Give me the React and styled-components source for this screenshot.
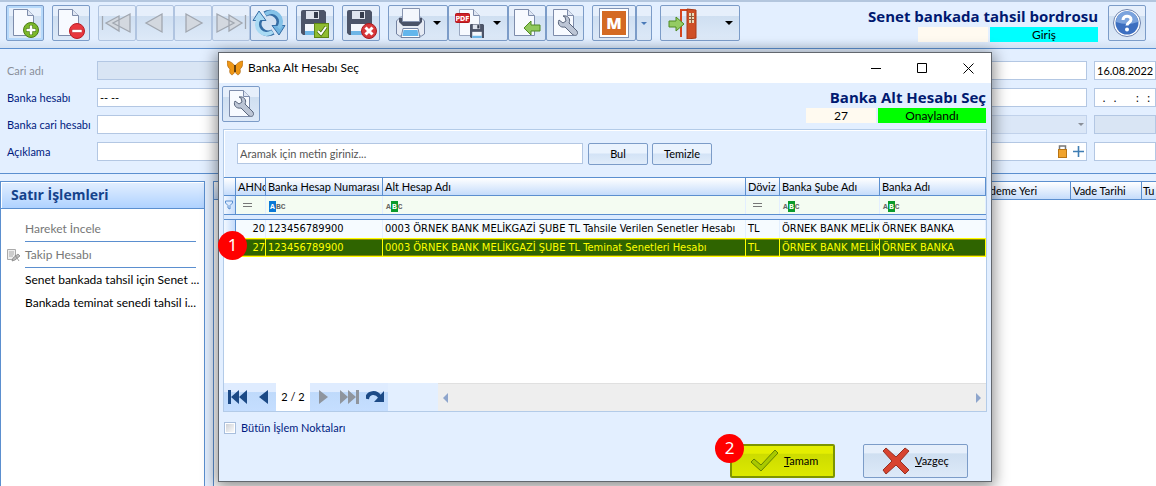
import React, { useState } from "react";
import styled, { createGlobalStyle, css } from "styled-components";

const GlobalStyle = createGlobalStyle`
  *, *::before, *::after {
    box-sizing: border-box;
  }

  body {
    margin: 0;
    background: #e3efff;
    color: #000;
    font: 11px/14px Lato, "Noto Sans", sans-serif;
  }

  button, input, select {
    font: inherit;
    color: inherit;
    margin: 0;
  }

  svg {
    display: block;
    flex: none;
  }
`;

const Page = styled.main`
  position: relative;
  display: flex;
  flex-direction: column;
  height: 100vh;
  overflow: hidden;
`;

/* ---------- toolbar ---------- */

const Toolbar = styled.header`
  display: flex;
  align-items: flex-start;
  gap: 8px;
  height: 49px;
  padding: 3px 10px 0 6px;
  border-top: 2px solid #b3c6de;
  border-bottom: 1px solid #5b8fcf;
  background: linear-gradient(#e3efff 80%, #d3e1f3);
`;

const ToolGroup = styled.div`
  display: flex;
`;

const ToolButton = styled.button`
  display: flex;
  align-items: center;
  justify-content: ${(p) => (p.$menu ? "space-between" : "center")};
  width: ${(p) => p.$width || 38}px;
  height: 36px;
  padding: ${(p) => (p.$menu ? "0 6px" : "0")};
  border: 1px solid #7c9cc8;
  border-radius: 2px;
  background: linear-gradient(#e6effb 28%, #cfdff1 30%, #dde9f8);
  ${(p) =>
    p.$active &&
    css`
      box-shadow: inset 0 0 0 2px #b6d9fb;
    `}
  &:disabled {
    border-color: #b0c4e0;
  }
`;

const TitleBlock = styled.div`
  display: flex;
  flex-direction: column;
  align-items: flex-end;
`;

const ScreenTitle = styled.h1`
  margin: 0;
  color: #001970;
  font: bold 15px/22px "Open Sans", "Noto Sans", sans-serif;
  white-space: nowrap;
`;

const StatusRow = styled.div`
  display: flex;
  gap: 2px;
`;

const Status = styled.span`
  width: ${(p) => p.$width}px;
  height: 15px;
  background: ${(p) => p.$color};
  font-size: 12px;
  line-height: 16px;
  text-align: center;
`;

/* ---------- form ---------- */

const Form = styled.form`
  display: flex;
  flex-direction: column;
  gap: 8px;
  padding: 12px 0 12px 7px;
  border-bottom: 1px solid #5b8fcf;
`;

const FormRow = styled.div`
  display: grid;
  grid-template-columns: 90px 1fr 1fr 62px;
  align-items: center;
`;

const FormLabel = styled.label`
  color: ${(p) => (p.$muted ? "#8a8f9a" : "#001a80")};
`;

const field = css`
  width: 100%;
  height: 19px;
  padding: 0 2px;
  border: 1px solid #b3c7e3;
  border-radius: 0;
  background: #fff;
  &:disabled {
    background: #d9e5f4;
  }
`;

const Field = styled.input`
  ${field}
`;

const FieldSelect = styled.select`
  ${field}
  appearance: none;
`;

const FieldWrap = styled.div`
  position: relative;
  padding-right: 7px;
`;

const FieldIcons = styled.span`
  position: absolute;
  top: 0;
  right: 10px;
  display: flex;
  align-items: center;
  gap: 6px;
  height: 19px;
`;

/* ---------- main area ---------- */

const Workspace = styled.div`
  display: flex;
  flex: 1;
  gap: 8px;
  min-height: 0;
  padding-top: 7px;
`;

const SidePanel = styled.aside`
  width: 205px;
  border: 1px solid #5b8fcf;
  border-bottom: 0;
  background: #fff;
`;

const SideTitle = styled.h2`
  height: 27px;
  margin: 0;
  padding-left: 10px;
  border-bottom: 1px solid #5b8fcf;
  background: linear-gradient(#e3efff, #afd2ff);
  box-shadow: inset 1px 1px #fff;
  color: #15428b;
  font: bold 14px/26px "Open Sans", "Noto Sans", sans-serif;
`;

const SideList = styled.ul`
  margin: 0;
  padding: 7px 4px 0 5px;
  list-style: none;
`;

const SideItem = styled.li`
  display: flex;
  align-items: center;
  height: ${(p) => (p.$ruled ? 26 : 23)}px;
`;

const SideIcon = styled.span`
  flex: none;
  width: 19px;
`;

const SideLink = styled.button`
  flex: 1;
  height: 100%;
  padding: 0;
  border: 0;
  margin-right: ${(p) => (p.$ruled ? 4 : 0)}px;
  background: none;
  font-size: 12px;
  text-align: left;
  white-space: nowrap;
  ${(p) =>
    p.$ruled &&
    css`
      border-bottom: 1px solid #5b8fcf;
      color: #777;
    `}
`;

const LinesGrid = styled.div`
  flex: 1;
  border: solid #5b8fcf;
  border-width: 1px 0 0 1px;
  background: #fff;
  overflow: hidden;
`;

const LinesTable = styled.table`
  width: 100%;
  border-spacing: 0;
  table-layout: fixed;

  th {
    height: 18px;
    padding: 0 2px;
    border: solid #5b8fcf;
    border-width: 0 1px 1px 0;
    background: linear-gradient(#fff, #c5dcfb);
    font-weight: normal;
    text-align: left;
    white-space: nowrap;
  }

  th:last-child {
    padding: 0 0 0 1px;
    border-right: 0;
  }
`;

/* ---------- dialog ---------- */

const Dialog = styled.section`
  position: absolute;
  top: 52px;
  right: 164px;
  bottom: 4px;
  left: 218px;
  display: flex;
  flex-direction: column;
  border: 1px solid #62676e;
  background: #e3efff;
  box-shadow: 0 3px 14px 2px rgba(0, 0, 0, 0.45);
`;

const TitleBar = styled.div`
  display: flex;
  align-items: center;
  height: 30px;
  padding-left: 8px;
  background: #fff;
`;

const DialogTitle = styled.h2`
  flex: 1;
  margin: 0 0 0 5px;
  font: 12px/16px Lato, "Noto Sans", sans-serif;
`;

const WindowButton = styled.button`
  display: flex;
  align-items: center;
  justify-content: center;
  width: 46px;
  height: 28px;
  padding: 0;
  border: 0;
  background: none;
`;

const DialogTools = styled.div`
  display: flex;
  justify-content: space-between;
  height: 46px;
  padding: 3px 5px 0 3px;
`;

const Panel = styled.div`
  display: flex;
  flex: 1;
  flex-direction: column;
  margin: 0 4px;
  border: 1px solid #b3cbe8;
  box-shadow: inset 1px 1px #fff;
`;

const SearchBar = styled.form`
  display: flex;
  height: 47px;
  padding: 13px 13px 0;
`;

const SearchInput = styled.input`
  flex: 0 1 346px;
  height: 21px;
  padding: 0 2px;
  margin-right: 5px;
  border: 1px solid #b3c7e3;
  background: #fff;
  &::placeholder {
    color: #555;
    opacity: 1;
  }
`;

const SmallButton = styled.button`
  width: 60px;
  height: 22px;
  margin-right: 4px;
  padding: 0;
  border: 1px solid #7c9cc8;
  border-radius: 2px;
  background: linear-gradient(#eaf3fe 45%, #d3e3f6 50%, #e0ecfa);
`;

const ListArea = styled.div`
  flex: 1;
  background: #fff;
`;

const AccountTable = styled.table`
  width: 100%;
  border-spacing: 0;
  border-top: 1px solid #5b8fcf;
  table-layout: fixed;

  th, td {
    padding: 0 0 0 2px;
    white-space: nowrap;
    overflow: hidden;
  }
`;

const HeadCell = styled.th`
  height: 18px;
  border: solid #5b8fcf;
  border-width: 0 1px 1px 0;
  background: linear-gradient(#fff, #c5dcfb);
  font-weight: normal;
  text-align: left;
`;

const FilterCell = styled.td`
  height: 18px;
  border-right: 1px solid #e3efff;
  background: #f4fcf2;
`;

const Marker = styled.td`
  position: relative;
  height: 18px;
  border-right: 1px solid #5b8fcf;
  background: linear-gradient(90deg, #f2f8ff, #c5dcfb);
  && {
    padding: 0 0 0 1px;
    overflow: visible;
  }
`;

const StripCell = styled.td`
  height: 6px;
  border: solid #5b8fcf;
  border-width: 1px 0;
  background: #dcebff;
  line-height: 0;
`;

const DataCell = styled.td`
  height: ${(p) => (p.$selected ? 19 : 17)}px;
  border-right: 1px solid ${(p) => (p.$selected ? "#ff0" : "#e3efff")};
  background: ${(p) => (p.$selected ? "#2f6400" : "#f6fbff")};
  color: ${(p) => (p.$selected ? "#ff0" : "#000")};
  font-family: "DejaVu Sans Condensed", sans-serif;
  text-align: ${(p) => (p.$right ? "right" : "left")};
  ${(p) =>
    p.$selected &&
    css`
      border-top: 1px solid #ff0;
      border-bottom: 1px solid #ff0;
      box-shadow: inset 0 1px #8a8b00, inset 0 -1px #8a8b00;
    `}
`;

const FilterTag = styled.span`
  display: inline-flex;
  align-items: center;
  margin-left: 1px;
  color: #666;
  font: bold 8px/11px "Liberation Mono", monospace;
`;

const FilterHit = styled.b`
  width: 7px;
  height: 11px;
  background: ${(p) => p.$color};
  color: #fff;
  text-align: center;
`;

const Equals = styled.span`
  display: block;
  width: 9px;
  height: 4px;
  margin-left: 5px;
  border: solid #777;
  border-width: 1px 0;
`;

const Pager = styled.div`
  display: flex;
  height: 28px;
`;

const PagerButtons = styled.div`
  display: flex;
  align-items: stretch;
  background: linear-gradient(#dfecff 32%, #bfdafb 34%, #c5deff);
`;

const PagerButton = styled.button`
  display: flex;
  align-items: center;
  justify-content: center;
  width: 26px;
  padding: 0;
  border: 0;
  background: none;
`;

const PageCount = styled.span`
  width: 34px;
  background: #fff;
  line-height: 28px;
  text-align: center;
`;

const ScrollTrack = styled.div`
  display: flex;
  flex: 1;
  align-items: center;
  justify-content: space-between;
  margin-left: 50px;
  padding: 0 5px;
  border-top: 1px solid #e0e0e0;
  background: #eee;
`;

const Footer = styled.footer`
  display: flex;
  justify-content: space-between;
  height: 69px;
  padding: 9px 23px 0 5px;
`;

const CheckLabel = styled.label`
  display: flex;
  align-items: center;
  align-self: flex-start;
  gap: 5px;
  color: #001a80;
`;

const CheckBox = styled.input`
  appearance: none;
  width: 12px;
  height: 12px;
  border: 1px solid #a9bfdd;
  background: linear-gradient(135deg, #c9ccd2, #fff);
  box-shadow: inset 0 0 0 1px #fff;
  &:checked {
    background: #15428b;
  }
`;

const Actions = styled.div`
  display: flex;
  gap: 28px;
  padding-top: 23px;
`;

const ActionButton = styled.button`
  position: relative;
  display: flex;
  align-items: center;
  gap: 5px;
  width: 105px;
  height: 34px;
  padding: 0 0 0 18px;
  border: ${(p) => (p.$primary ? "2px solid #7d9500" : "1px solid #7c9cc8")};
  border-radius: 2px;
  background: ${(p) =>
    p.$primary
      ? "linear-gradient(#e4ee00 24%, #cddc00 28%, #dde900)"
      : "linear-gradient(#e6effb 24%, #cfdff1 28%, #dde9f8)"};
`;

const StepBadge = styled.span`
  position: absolute;
  top: ${(p) => p.$top}px;
  left: ${(p) => p.$left}px;
  z-index: 1;
  width: 29px;
  height: 29px;
  border-radius: 50%;
  background: #f00;
  color: #fff;
  font: 17px/28px "Noto Sans", sans-serif;
  text-align: center;
`;

/* ---------- icons ---------- */

const PageShape = ({ x = 6 }) => (
  <g transform={`translate(${x} 2)`}>
    <path d="M.5.5h14l6 6v20H.5z" fill="#f7faff" stroke="#7d8cab" />
    <path d="M14.500.5v6h6" fill="#dfe6f3" stroke="#7d8cab" />
  </g>
);

const Floppy = ({ x = 0, y = 0, s = 1 }) => (
  <g transform={`translate(${x} ${y}) scale(${s})`}>
    <path d="M0 2a2 2 0 0 1 2-2h21l2 2v23H2l-2-2z" fill="#4c5468" />
    <path d="M5 1h13v8H5z" fill="#dfe4ee" />
    <path d="M13 2h4v6h-4z" fill="#343b4c" />
    <path d="M4 14h17v11H4z" fill="#f4f7fb" />
    <path d="M4 21h17v4H4z" fill="#6fb6e6" />
  </g>
);

const Wrench = () => (
  <path
    d="M10 13l4 3 3-2-1-4-2-1c5-1 8 3 6 7l8 8c2 4-2 6-5 3l-7-7c-5 1-8-3-6-7z"
    fill="#bcc5d5"
    stroke="#59657c"
  />
);

const NewIcon = () => (
  <svg width="32" height="32" viewBox="0 0 32 32">
    <PageShape x={4} />
    <circle cx="22" cy="23" r="7.500" fill="#7bb82a" stroke="#4c7d15" />
    <path d="M22 18v10M17 23h10" stroke="#4c7d15" strokeWidth="4" />
    <path d="M22 18.500v9M17.500 23h9" stroke="#fff" strokeWidth="2.500" />
  </svg>
);

const DeleteIcon = () => (
  <svg width="32" height="32" viewBox="0 0 32 32">
    <PageShape x={3} />
    <circle cx="22" cy="24" r="7.500" fill="#e8373e" stroke="#b91c24" />
    <rect x="17" y="22.500" width="10" height="3" fill="#fff" stroke="#b91c24" strokeWidth=".5" />
  </svg>
);

const navShapes = {
  first: "M1.500 9v14M18 9L5 16l13 8zM29 7L12 16l17 9z",
  prev: "M23 7L7 16l16 9z",
  next: "M9 7l16 9-16 9z",
  last: "M30.500 8v14M14 8l13 8-13 8zM2 7l17 9-17 9z",
};

const NavIcon = ({ kind }) => (
  <svg width="32" height="32" viewBox="0 0 32 32">
    <path d={navShapes[kind]} fill="#d3d8df" stroke="#a1a7b0" strokeWidth="1.300" />
  </svg>
);

const RefreshIcon = () => (
  <svg width="34" height="32" viewBox="0 0 34 32">
    <g fill="none" strokeWidth="6" stroke="#356da4">
      <path d="M8 12a9.500 9.500 0 0 0 13 13" />
      <path d="M26 20A9.500 9.500 0 0 0 13 7" />
    </g>
    <path d="M7 4l7 9.500H1z" fill="#a9daf3" stroke="#356da4" />
    <path d="M27 28l-7-9.500h13z" fill="#6fb3e0" stroke="#356da4" />
    <g fill="none" strokeWidth="4">
      <path d="M7.500 11a9.500 9.500 0 0 0 13 13.800" stroke="#a9daf3" />
      <path d="M26.500 21A9.500 9.500 0 0 0 13.500 7.200" stroke="#84c2e8" />
    </g>
  </svg>
);

const SaveIcon = () => (
  <svg width="32" height="32" viewBox="0 0 32 32">
    <Floppy x={2} y={3} />
    <rect x="15.500" y="16.500" width="14" height="14" fill="#8fbc30" stroke="#5e8714" />
    <path d="M19 24l3 3 5-7" fill="none" stroke="#466b0c" strokeWidth="3.500" />
    <path d="M19 24l3 3 5-7" fill="none" stroke="#fff" strokeWidth="2" />
  </svg>
);

const SaveCloseIcon = () => (
  <svg width="32" height="32" viewBox="0 0 32 32">
    <Floppy x={2} y={3} />
    <circle cx="24" cy="24" r="7.500" fill="#d8373a" stroke="#a81b1f" />
    <path d="M20.500 20.500l7 7M27.500 20.500l-7 7" stroke="#fff" strokeWidth="3" />
  </svg>
);

const PrinterIcon = () => (
  <svg width="32" height="32" viewBox="0 0 32 32">
    <path d="M1.500 14l4-4h20l4 4v13l-3 2h-22l-3-2z" fill="#e6ebf4" stroke="#7584a3" />
    <path d="M4 11h23v4l-4 4H8l-4-4z" fill="#4a5368" />
    <path d="M7.500 1.500h17v13h-17z" fill="#f4f7fd" stroke="#8794b0" />
    <path d="M8 21.500h15l2 9H6z" fill="#fff" stroke="#7584a3" />
    <path d="M8.500 23h14l1 6h-16z" fill="#63b6ec" />
  </svg>
);

const PdfIcon = () => (
  <svg width="32" height="32" viewBox="0 0 32 32">
    <g transform="translate(4 2)">
      <path d="M.5.5h14l6 6v20H.5z" fill="#f7faff" stroke="#9aa7c0" />
      <path d="M14.500.5v6h6" fill="#dfe6f3" stroke="#7d8cab" />
    </g>
    <rect x=".5" y="6.500" width="14" height="9" rx="1" fill="#cf2228" stroke="#b0161c" />
    <text x="7.500" y="14" textAnchor="middle" fontSize="7" fontWeight="bold" fontFamily="DejaVu Sans Condensed" fill="#fff">
      PDF
    </text>
    <Floppy x={15} y={17} s={0.56} />
  </svg>
);

const ExportIcon = () => (
  <svg width="32" height="32" viewBox="0 0 32 32">
    <PageShape x={3} />
    <path d="M13 21l7-7v4h9v6h-9v4z" fill="#90c85c" stroke="#4f8a22" />
  </svg>
);

const ToolsIcon = () => (
  <svg width="32" height="32" viewBox="0 0 32 32">
    <PageShape x={4} />
    <Wrench />
  </svg>
);

const DoorIcon = () => (
  <svg width="32" height="32" viewBox="0 0 32 32">
    <path d="M14 30V3h11" fill="none" stroke="#d4451f" strokeWidth="2" />
    <path d="M20 2l9 1v28l-9 1z" fill="#cf4f26" stroke="#a83a18" />
    <path d="M22 6h5v10h-5z" fill="#e8d9b8" />
    <path d="M24.500 6v10M22 9.500h5M22 12.500h5" stroke="#8f5a3c" />
    <path d="M2 14h7v-4l8 7-8 7v-4H2z" fill="#94cb63" stroke="#4f8a22" />
  </svg>
);

const HelpIcon = () => (
  <svg width="30" height="30" viewBox="0 0 30 30">
    <circle cx="15" cy="15" r="13.500" fill="#fff" stroke="#6d82ad" />
    <circle cx="15" cy="15" r="11.500" fill="#3d6fc0" />
    <path d="M4 14a11 11 0 0 1 22 0q-11 4-22 0" fill="#7ba3dd" />
    <path d="M11 12c0-5 8-5 8-.5 0 3-4 3-4 6" fill="none" stroke="#fff" strokeWidth="3" />
    <circle cx="15" cy="21.500" r="2" fill="#fff" />
  </svg>
);

const Caret = ({ color = "#000", size = 8 }) => (
  <svg width={size} height={size / 2} viewBox="0 0 8 4">
    <path d="M0 0h8L4 4z" fill={color} />
  </svg>
);

const ButterflyIcon = () => (
  <svg width="16" height="16" viewBox="0 0 16 16">
    <path
      d="M8 6C6 3 3 1 0 1c0 4 1 7 3 8-1 3 0 5 2 6 2-1 3-3 3-5 0 2 1 4 3 5 2-1 3-3 2-6 2-1 3-4 3-8-3 0-6 2-8 5z"
      fill="#ee9614"
      stroke="#a8610c"
      strokeWidth=".6"
    />
    <path d="M8 5v7" stroke="#3b260c" strokeWidth="1.500" />
  </svg>
);

const LockIcon = () => (
  <svg width="9" height="13" viewBox="0 0 9 13">
    <path d="M1.500 5V1h6v4" fill="none" stroke="#777" strokeWidth="1.500" />
    <rect x=".5" y="4.500" width="8" height="8" fill="#f1a32c" stroke="#b87514" />
  </svg>
);

const PlusIcon = () => (
  <svg width="11" height="11" viewBox="0 0 11 11">
    <path d="M5.500 0v11M0 5.500h11" stroke="#3f7db3" strokeWidth="1.600" />
  </svg>
);

const NoteIcon = () => (
  <svg width="14" height="14" viewBox="0 0 14 14">
    <path d="M1.500 1.500h8v10h-8z" fill="#eee" stroke="#aaa" />
    <path d="M3 4h5M3 6h5M3 8h4" stroke="#aaa" />
    <path d="M6 13l1-3 5-4 2 2-5 4zM9 7l4 6" fill="#bbb" stroke="#888" strokeWidth=".8" />
  </svg>
);

const FunnelIcon = () => (
  <svg width="8" height="10" viewBox="0 0 8 10">
    <path d="M.5 1h7v2L5 5.500V9L3 8V5.500L.5 3z" fill="#dcebff" stroke="#5b8fcf" />
  </svg>
);

const pagerShapes = {
  first: "M0 0h3v14H0zM11 0v14L3 7zM19 0v14l-8-7z",
  prev: "M14 0v14L5 7z",
  next: "M5 0v14l9-7z",
  last: "M0 0v14l8-7zM8 0v14l8-7zM16 0h3v14h-3z",
};

const PagerIcon = ({ kind, color }) => (
  <svg width="19" height="14" viewBox="0 0 19 14">
    <path d={pagerShapes[kind]} fill={color} />
  </svg>
);

const RedoIcon = () => (
  <svg width="19" height="14" viewBox="0 0 19 14">
    <path d="M1 9c1-7 9-8 13-2" fill="none" stroke="#1c4a86" strokeWidth="4" />
    <path d="M18 1v11H8z" fill="#1c4a86" />
  </svg>
);

const CheckIcon = () => (
  <svg width="29" height="24" viewBox="0 0 29 24">
    <path d="M1 13l3-3 7 6L25 1l3 3-17 18z" fill="#a8c900" stroke="#648300" />
  </svg>
);

const CrossIcon = () => (
  <svg width="28" height="28" viewBox="0 0 28 28">
    <path d="M4 1l10 9 9-9 4 3-9 10 9 9-4 4-9-9-10 9-3-4 9-9-9-10z" fill="#d8432f" stroke="#963021" />
  </svg>
);

const LogoTile = styled.span`
  width: 30px;
  height: 30px;
  padding: 2px;
  border: 1px solid #8294b5;
  background: linear-gradient(#d46a23, #d46a23) content-box, #fff;
  color: #fff;
  font: 800 16px/24px "Open Sans", sans-serif;
  text-align: center;
`;

/* ---------- data ---------- */

const columns = [
  { key: "no", title: "AHNo", width: 30, filter: "eq", right: true },
  { key: "account", title: "Banka Hesap Numarası", width: 117, filter: "starts" },
  { key: "name", title: "Alt Hesap Adı", filter: "contains" },
  { key: "currency", title: "Döviz", width: 34, filter: "eq" },
  { key: "branch", title: "Banka Şube Adı", width: 100, filter: "contains" },
  { key: "bank", title: "Banka Adı", width: 106, filter: "contains" },
];

const rows = [
  {
    no: 20,
    account: "123456789900",
    name: "0003 ÖRNEK BANK MELİKGAZİ ŞUBE TL Tahsile Verilen Senetler Hesabı",
    currency: "TL",
    branch: "ÖRNEK BANK MELİK",
    bank: "ÖRNEK BANKA",
  },
  {
    no: 27,
    account: "123456789900",
    name: "0003 ÖRNEK BANK MELİKGAZİ ŞUBE TL Teminat Senetleri Hesabı",
    currency: "TL",
    branch: "ÖRNEK BANK MELİK",
    bank: "ÖRNEK BANKA",
  },
];

const Filter = ({ kind }) => {
  if (kind === "eq") return <Equals />;
  if (kind === "starts") {
    return (
      <FilterTag>
        <FilterHit $color="#0a78d6">A</FilterHit>BC
      </FilterTag>
    );
  }
  return (
    <FilterTag>
      A<FilterHit $color="#0a9a2b">B</FilterHit>C
    </FilterTag>
  );
};

const MainTitle = styled(TitleBlock)`
  flex: 1;
  margin-right: 2px;
`;

const MainToolbar = () => (
  <Toolbar>
    <ToolButton $active aria-label="Yeni"><NewIcon /></ToolButton>
    <ToolButton aria-label="Sil"><DeleteIcon /></ToolButton>
    <ToolGroup>
      {["first", "prev", "next", "last"].map((kind) => (
        <ToolButton key={kind} disabled aria-label={kind}>
          <NavIcon kind={kind} />
        </ToolButton>
      ))}
      <ToolButton aria-label="Yenile"><RefreshIcon /></ToolButton>
    </ToolGroup>
    <ToolButton aria-label="Kaydet"><SaveIcon /></ToolButton>
    <ToolButton aria-label="Vazgeç"><SaveCloseIcon /></ToolButton>
    <ToolGroup>
      <ToolButton $width={60} $menu aria-label="Yazdır"><PrinterIcon /><Caret /></ToolButton>
      <ToolButton $width={60} $menu aria-label="PDF"><PdfIcon /><Caret /></ToolButton>
      <ToolButton aria-label="Aktar"><ExportIcon /></ToolButton>
      <ToolButton aria-label="Araçlar"><ToolsIcon /></ToolButton>
    </ToolGroup>
    <ToolGroup>
      <ToolButton $width={44} aria-label="M"><LogoTile>M</LogoTile></ToolButton>
      <ToolButton $width={16} aria-label="Menü"><Caret color="#4a7ab8" size={6} /></ToolButton>
    </ToolGroup>
    <ToolButton $width={80} $menu aria-label="Çıkış"><DoorIcon /><Caret /></ToolButton>
    <MainTitle>
      <ScreenTitle>Senet bankada tahsil bordrosu</ScreenTitle>
      <StatusRow>
        <Status $width={70} $color="#fffaf0" />
        <Status $width={108} $color="#0ff">Giriş</Status>
      </StatusRow>
    </MainTitle>
    <ToolButton aria-label="Yardım"><HelpIcon /></ToolButton>
  </Toolbar>
);

const HeaderForm = () => (
  <Form>
    <FormRow>
      <FormLabel htmlFor="cari" $muted>Cari adı</FormLabel>
      <Field id="cari" disabled />
      <FieldWrap><Field aria-label="Belge no" /></FieldWrap>
      <Field aria-label="Tarih" defaultValue="16.08.2022" />
    </FormRow>
    <FormRow>
      <FormLabel htmlFor="banka">Banka hesabı</FormLabel>
      <Field id="banka" defaultValue="-- --" />
      <FieldWrap><Field aria-label="Referans" /></FieldWrap>
      <Field aria-label="Saat" defaultValue="  .   .       :   :" />
    </FormRow>
    <FormRow>
      <FormLabel htmlFor="bankacari">Banka cari hesabı</FormLabel>
      <Field id="bankacari" />
      <FieldWrap>
        <FieldSelect aria-label="Tür" disabled />
        <FieldIcons><Caret color="#8a8f98" size={6} /></FieldIcons>
      </FieldWrap>
      <Field aria-label="Kur" disabled />
    </FormRow>
    <FormRow>
      <FormLabel htmlFor="aciklama">Açıklama</FormLabel>
      <Field id="aciklama" />
      <FieldWrap>
        <Field aria-label="Özel kod" />
        <FieldIcons><LockIcon /><PlusIcon /></FieldIcons>
      </FieldWrap>
      <Field aria-label="Tutar" />
    </FormRow>
  </Form>
);

const AccountDialog = () => {
  const [selected, setSelected] = useState(27);

  return (
    <Dialog role="dialog" aria-labelledby="dialog-title">
      <TitleBar>
        <ButterflyIcon />
        <DialogTitle id="dialog-title">Banka Alt Hesabı Seç</DialogTitle>
        <WindowButton aria-label="Küçült">
          <svg width="11" height="11"><path d="M0 5.500h10" stroke="#000" /></svg>
        </WindowButton>
        <WindowButton aria-label="Büyüt">
          <svg width="11" height="11"><path d="M.5.5h9v9h-9z" fill="none" stroke="#000" /></svg>
        </WindowButton>
        <WindowButton aria-label="Kapat">
          <svg width="11" height="11"><path d="M.5.5l10 10M10.500.5l-10 10" stroke="#000" /></svg>
        </WindowButton>
      </TitleBar>

      <DialogTools>
        <ToolButton aria-label="Araçlar"><ToolsIcon /></ToolButton>
        <TitleBlock>
          <ScreenTitle as="h3">Banka Alt Hesabı Seç</ScreenTitle>
          <StatusRow>
            <Status $width={70} $color="#fffaf0">27</Status>
            <Status $width={108} $color="#0f0">Onaylandı</Status>
          </StatusRow>
        </TitleBlock>
      </DialogTools>

      <Panel>
        <SearchBar onSubmit={(e) => e.preventDefault()}>
          <SearchInput aria-label="Ara" placeholder="Aramak için metin giriniz..." />
          <SmallButton>Bul</SmallButton>
          <SmallButton type="reset">Temizle</SmallButton>
        </SearchBar>

        <ListArea>
          <AccountTable>
            <colgroup>
              <col style={{ width: 12 }} />
              {columns.map((c) => (
                <col key={c.key} style={{ width: c.width }} />
              ))}
            </colgroup>
            <thead>
              <tr>
                <HeadCell />
                {columns.map((c) => (
                  <HeadCell key={c.key}>{c.title}</HeadCell>
                ))}
              </tr>
            </thead>
            <tbody>
              <tr>
                <Marker><FunnelIcon /></Marker>
                {columns.map((c) => (
                  <FilterCell key={c.key}><Filter kind={c.filter} /></FilterCell>
                ))}
              </tr>
              <tr>
                <StripCell colSpan={columns.length + 1} />
              </tr>
              {rows.map((row) => (
                <tr key={row.no} onClick={() => setSelected(row.no)}>
                  <Marker>
                    {row.no === 27 && <StepBadge $top={-7} $left={-6}>1</StepBadge>}
                  </Marker>
                  {columns.map((c) => (
                    <DataCell key={c.key} $right={c.right} $selected={row.no === selected}>
                      {row[c.key]}
                    </DataCell>
                  ))}
                </tr>
              ))}
            </tbody>
          </AccountTable>
        </ListArea>

        <Pager>
          <PagerButtons>
            <PagerButton aria-label="İlk"><PagerIcon kind="first" color="#1c4a86" /></PagerButton>
            <PagerButton aria-label="Önceki"><PagerIcon kind="prev" color="#1c4a86" /></PagerButton>
            <PageCount>2 / 2</PageCount>
            <PagerButton aria-label="Sonraki"><PagerIcon kind="next" color="#8f959e" /></PagerButton>
            <PagerButton aria-label="Son"><PagerIcon kind="last" color="#8f959e" /></PagerButton>
            <PagerButton aria-label="Yinele"><RedoIcon /></PagerButton>
          </PagerButtons>
          <ScrollTrack>
            <svg width="5" height="10"><path d="M5 0v10L0 5z" fill="#8ea5cc" /></svg>
            <svg width="5" height="10"><path d="M0 0v10l5-5z" fill="#8ea5cc" /></svg>
          </ScrollTrack>
        </Pager>
      </Panel>

      <Footer>
        <CheckLabel>
          <CheckBox type="checkbox" />
          Bütün İşlem Noktaları
        </CheckLabel>
        <Actions>
          <ActionButton $primary>
            <StepBadge $top={-12} $left={-17}>2</StepBadge>
            <CheckIcon />
            <span><u>T</u>amam</span>
          </ActionButton>
          <ActionButton>
            <CrossIcon />
            <span><u>V</u>azgeç</span>
          </ActionButton>
        </Actions>
      </Footer>
    </Dialog>
  );
};

const App = () => (
  <>
    <GlobalStyle />
    <Page>
      <MainToolbar />
      <HeaderForm />
      <Workspace>
        <SidePanel>
          <SideTitle>Satır İşlemleri</SideTitle>
          <SideList>
            <SideItem $ruled>
              <SideIcon />
              <SideLink $ruled>Hareket İncele</SideLink>
            </SideItem>
            <SideItem $ruled>
              <SideIcon><NoteIcon /></SideIcon>
              <SideLink $ruled>Takip Hesabı</SideLink>
            </SideItem>
            <SideItem>
              <SideIcon />
              <SideLink>Senet bankada tahsil için Senet ...</SideLink>
            </SideItem>
            <SideItem>
              <SideIcon />
              <SideLink>Bankada teminat senedi tahsil i...</SideLink>
            </SideItem>
          </SideList>
        </SidePanel>
        <LinesGrid>
          <LinesTable>
            <colgroup>
              <col />
              <col style={{ width: 92 }} />
              <col style={{ width: 71 }} />
              <col style={{ width: 14 }} />
            </colgroup>
            <thead>
              <tr>
                <th />
                <th>Ödeme Yeri</th>
                <th>Vade Tarihi</th>
                <th>Tu</th>
              </tr>
            </thead>
          </LinesTable>
        </LinesGrid>
      </Workspace>
      <AccountDialog />
    </Page>
  </>
);

export default App;
